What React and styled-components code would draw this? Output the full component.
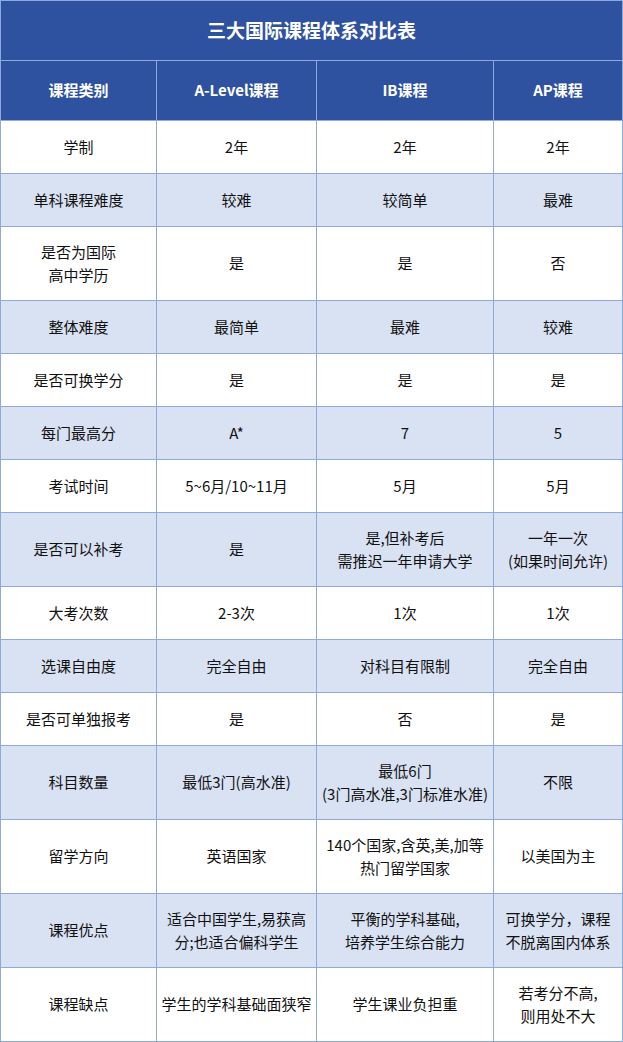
import React from 'react';
import styled, { createGlobalStyle } from 'styled-components';

const GlobalStyle = createGlobalStyle`
  html, body {
    margin: 0;
    padding: 0;
    background: #ffffff;
  }
  body {
    font-family: "Noto Sans CJK SC", "Microsoft YaHei", "DejaVu Sans", sans-serif;
  }
`;

const Sheet = styled.div`
  display: grid;
  grid-template-columns: 155px 159px 176px 128px;
  gap: 1px;
  padding: 1px;
  width: 621px;
  background: #8eaadb;
`;

const TitleCell = styled.div`
  grid-column: 1 / -1;
  height: 59px;
  box-sizing: border-box;
  padding-bottom: 2px;
  display: flex;
  align-items: center;
  justify-content: center;
  background: #2f52a0;
  color: #ffffff;
  font-size: 19px;
  font-weight: 700;
`;

const HeadCell = styled.div`
  height: 59px;
  box-sizing: border-box;
  padding-bottom: 2px;
  display: flex;
  align-items: center;
  justify-content: center;
  background: #2f52a0;
  color: #ffffff;
  font-size: 15px;
  font-weight: 700;
`;

const Cell = styled.div`
  height: ${(p) => (p.$tall ? '73px' : '52px')};
  box-sizing: border-box;
  padding-bottom: 2px;
  display: flex;
  align-items: center;
  justify-content: center;
  text-align: center;
  background: ${(p) => (p.$alt ? '#d9e2f3' : '#ffffff')};
  color: #111111;
  font-size: 15px;
  line-height: 23px;
  white-space: pre-line;
`;

const heads = ['课程类别', 'A-Level课程', 'IB课程', 'AP课程'];

const rows = [
  ['学制', '2年', '2年', '2年'],
  ['单科课程难度', '较难', '较简单', '最难'],
  ['是否为国际\n高中学历', '是', '是', '否'],
  ['整体难度', '最简单', '最难', '较难'],
  ['是否可换学分', '是', '是', '是'],
  ['每门最高分', 'A*', '7', '5'],
  ['考试时间', '5~6月/10~11月', '5月', '5月'],
  ['是否可以补考', '是', '是,但补考后\n需推迟一年申请大学', '一年一次\n(如果时间允许)'],
  ['大考次数', '2-3次', '1次', '1次'],
  ['选课自由度', '完全自由', '对科目有限制', '完全自由'],
  ['是否可单独报考', '是', '否', '是'],
  ['科目数量', '最低3门(高水准)', '最低6门\n(3门高水准,3门标准水准)', '不限'],
  ['留学方向', '英语国家', '140个国家,含英,美,加等\n热门留学国家', '以美国为主'],
  ['课程优点', '适合中国学生,易获高\n分;也适合偏科学生', '平衡的学科基础,\n培养学生综合能力', '可换学分，课程\n不脱离国内体系'],
  ['课程缺点', '学生的学科基础面狭窄', '学生课业负担重', '若考分不高,\n则用处不大'],
];

export default function App() {
  return (
    <>
      <GlobalStyle />
      <Sheet>
        <TitleCell>三大国际课程体系对比表</TitleCell>
        {heads.map((h) => (
          <HeadCell key={h}>{h}</HeadCell>
        ))}
        {rows.map((row, i) => {
          const tall = row.some((t) => t.includes('\n'));
          return row.map((text, j) => (
            <Cell key={`${i}-${j}`} $alt={i % 2 === 1} $tall={tall}>
              {text}
            </Cell>
          ));
        })}
      </Sheet>
    </>
  );
}
